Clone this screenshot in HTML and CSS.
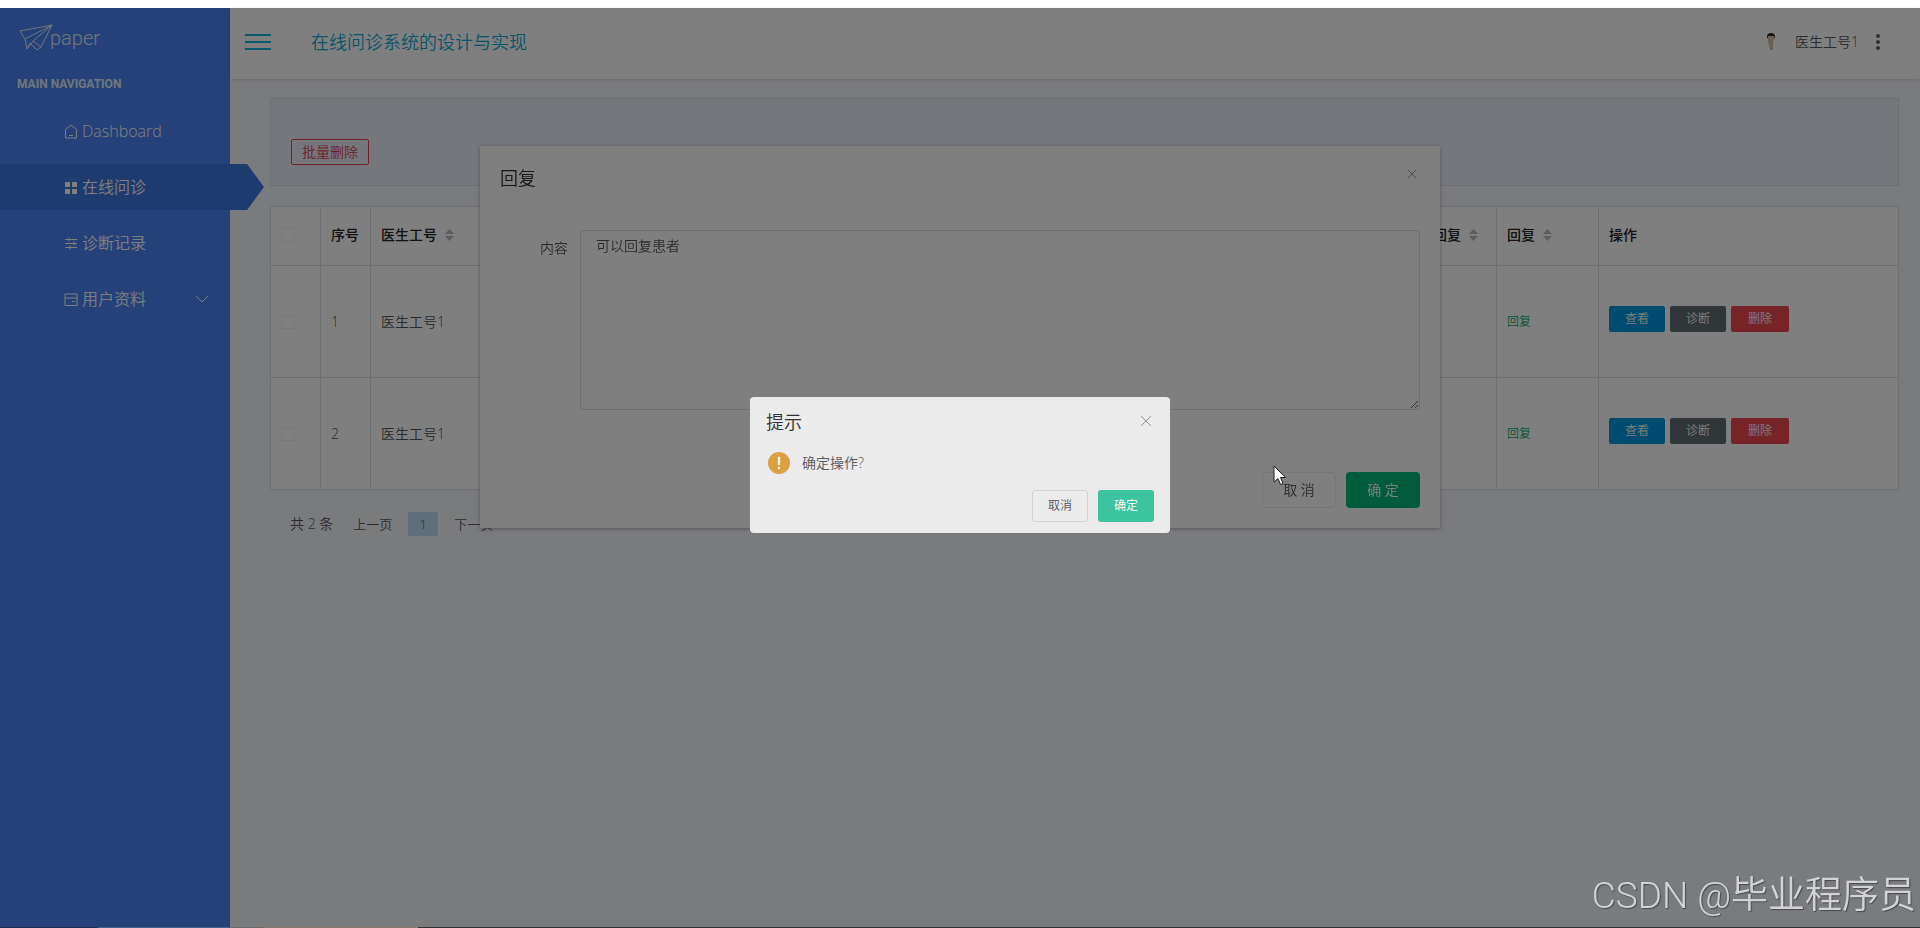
FILE: index.html
```
<!DOCTYPE html>
<html lang="zh">
  <head>
    <meta charset="UTF-8" />
    <meta name="viewport" content="width=device-width, initial-scale=1.0" />
    <title>在线问诊系统的设计与实现</title>
    <link rel="stylesheet" href="styles.css">
  </head>
  <body>
    <div class="wrapper">
      <!-- sidebar -->
      <nav class="sidebar">
        <a class="logo" href="#">
          <svg width="36" height="28" viewBox="0 0 36 28" fill="none" stroke="currentColor" stroke-width="1">
            <path d="M2 7 L34 1 L23 23 L15 17 L34 1 L7 15 Z M7 15 L9 25 L12 19 M9 25 L15 17 M12 19 L19 26 L23 23" />
          </svg><span>paper</span>
        </a>
        <h6 class="nav-title">MAIN NAVIGATION</h6>
        <ul class="menu">
          <li>
            <a href="#">
              <svg width="14" height="15" viewBox="0 0 14 15" fill="none" stroke="currentColor">
                <path d="M1.500 14 V5.500 L7 1 L12.500 5.500 V14 Z M5 11.500 H9" />
              </svg>Dashboard</a>
          </li>
          <li class="active">
            <a href="#">
              <svg width="14" height="15" viewBox="0 0 14 15" fill="currentColor">
                <path d="M1 2 H6 V7 H1 Z M8 2 H13 V7 H8 Z M1 9 H6 V14 H1 Z M8 9 H13 V14 H8 Z" />
              </svg>在线问诊</a>
          </li>
          <li>
            <a href="#">
              <svg width="14" height="15" viewBox="0 0 14 15" fill="none" stroke="currentColor">
                <path d="M1 3.500 H13 M1 7.500 H13 M1 11.500 H13 M5 1.500 V5.500 M10 5.500 V9.500 M6 9.500 V13.500" />
              </svg>诊断记录</a>
          </li>
          <li>
            <a href="#">
              <svg width="14" height="15" viewBox="0 0 14 15" fill="none" stroke="currentColor">
                <path d="M1 2 H13 V13.500 H1 Z M1 6 H13 M8 9.500 H11" />
              </svg>用户资料
              <svg class="arrow" width="14" height="8" viewBox="0 0 14 8" fill="none" stroke="currentColor">
                <path d="M1 1 L7 7 L13 1" />
              </svg>
            </a>
          </li>
        </ul>
      </nav>

      <!-- content -->
      <div class="content">
        <header class="top">
          <button class="burger" aria-label="menu"><i></i><i></i><i></i></button>
          <h1>在线问诊系统的设计与实现</h1>
          <div class="user">
            <svg width="12" height="20" viewBox="0 0 12 20">
              <path d="M2 5 Q2 1 6 1 Q10 1 10 5 L9 7 H3 Z" fill="#33251f" />
              <path d="M3 4 H9 V8 L8 10 V18 H5 L3 9 Z" fill="#d8bda3" />
            </svg>
            <span>医生工号1</span>
            <button class="dots" aria-label="more"><i></i><i></i><i></i></button>
          </div>
        </header>

        <main>
          <div class="tools">
            <button class="btn-batch">批量删除</button>
          </div>

          <table class="list">
            <colgroup>
              <col class="c-check" /><col class="c-index" /><col /><col class="c-replied" /><col class="c-reply" /><col class="c-action" />
            </colgroup>
            <thead>
              <tr>
                <th><input type="checkbox" aria-label="all" /></th>
                <th>序号</th>
                <th>医生工号<i class="sort"></i></th>
                <th>是否回复<i class="sort"></i></th>
                <th>回复<i class="sort"></i></th>
                <th>操作</th>
              </tr>
            </thead>
            <tbody>
              <tr>
                <td><input type="checkbox" aria-label="1" /></td>
                <td>1</td>
                <td>医生工号1</td>
                <td></td>
                <td><a class="reply" href="#">回复</a></td>
                <td>
                  <div class="actions">
                    <button class="blue">查看</button>
                    <button class="grey">诊断</button>
                    <button class="red">删除</button>
                  </div>
                </td>
              </tr>
              <tr>
                <td><input type="checkbox" aria-label="2" /></td>
                <td>2</td>
                <td>医生工号1</td>
                <td></td>
                <td><a class="reply" href="#">回复</a></td>
                <td>
                  <div class="actions">
                    <button class="blue">查看</button>
                    <button class="grey">诊断</button>
                    <button class="red">删除</button>
                  </div>
                </td>
              </tr>
            </tbody>
          </table>

          <div class="pager">
            <span>共 2 条</span>
            <button>上一页</button>
            <button class="current">1</button>
            <button>下一页</button>
          </div>
        </main>
      </div>
    </div>

    <!-- reply dialog -->
    <div class="dialog" role="dialog">
      <div class="dialog-head">
        <h2>回复</h2>
        <button class="close" aria-label="close">
          <svg width="10" height="10" viewBox="0 0 10 10" stroke="currentColor"><path d="M1 1 L9 9 M9 1 L1 9" /></svg>
        </button>
      </div>
      <div class="dialog-body">
        <label for="reply-text">内容</label>
        <textarea id="reply-text">可以回复患者</textarea>
      </div>
      <div class="dialog-foot">
        <button>取 消</button>
        <button class="primary">确 定</button>
      </div>
    </div>

    <!-- confirm box -->
    <div class="mask">
      <div class="confirm" role="alertdialog">
        <div class="confirm-head">
          <h3>提示</h3>
          <button class="close" aria-label="close">
            <svg width="12" height="12" viewBox="0 0 12 12" stroke="currentColor"><path d="M1 1 L11 11 M11 1 L1 11" /></svg>
          </button>
        </div>
        <p>
          <svg width="22" height="22" viewBox="0 0 22 22">
            <circle cx="11" cy="11" r="11" fill="#dd9f41" />
            <path d="M10 5 H12 L11.700 13 H10.300 Z" fill="#fff" stroke="#fff" stroke-width="0.500" />
            <circle cx="11" cy="16" r="1.200" fill="#fff" />
          </svg>
          确定操作?
        </p>
        <div class="confirm-foot">
          <button>取消</button>
          <button class="primary">确定</button>
        </div>
      </div>
    </div>

    <svg class="cursor" width="14" height="21" viewBox="0 0 14 21">
      <path d="M1 1 V17 L5 13.500 L7.500 19.500 L10 18.500 L7.500 12.500 H12.500 Z" fill="#fff" stroke="#222" />
    </svg>
    <div class="watermark">CSDN @毕业程序员</div>
    <div class="taskbar"></div>
  </body>
</html>
```
FILE: styles.css
```
* {
  box-sizing: border-box;
}

body {
  margin: 0;
  padding-top: 8px;
  background: #fff;
  color: #55575b;
  font-family: "Open Sans", "Noto Sans CJK SC", sans-serif;
  font-size: 14px;
  font-weight: 350;
  line-height: 20px;
  overflow: hidden;
}

button,
textarea {
  font: inherit;
  color: inherit;
}

button {
  padding: 0;
  border: 0;
  background: none;
}

a {
  color: inherit;
  text-decoration: none;
}

h1,
h2,
h3,
h6,
p,
ul {
  margin: 0;
  padding: 0;
}

.wrapper {
  display: flex;
  min-height: calc(100vh - 8px);
  background: #f5f6fa;
}

/* sidebar */
.sidebar {
  width: 230px;
  flex-shrink: 0;
  background: #4884f2;
  color: #fff;
}

.logo {
  display: flex;
  height: 60px;
  padding: 16px 0 0 18px;
  color: #e4ecf4;
  font: 300 20px/28px Roboto, sans-serif;
}

.logo span {
  margin-left: -4px;
}

.nav-title {
  padding-left: 17px;
  color: #e4ecf4;
  font: 700 12px/32px Roboto, sans-serif;
}

.menu {
  list-style: none;
  padding-top: 8px;
}

.menu li {
  height: 46px;
  margin-bottom: 10px;
}

.menu a {
  display: flex;
  align-items: center;
  gap: 4px;
  height: 46px;
  padding: 0 21px 0 64px;
  font-size: 16px;
}

.menu .active {
  position: relative;
  width: 264px;
  background: #3a76dc;
  clip-path: polygon(0 0, 247px 0, 100% 50%, 247px 100%, 0 100%);
}

.menu .arrow {
  margin-left: auto;
}

/* content */
.content {
  flex: 1;
  min-width: 0;
}

.top {
  display: flex;
  align-items: center;
  height: 71px;
  padding: 0 40px 3px 15px;
  background: #fff;
  box-shadow: 0 1px 4px rgba(0, 0, 0, 0.12);
}

.burger {
  display: flex;
  flex-direction: column;
  gap: 5px;
  width: 26px;
}

.burger i {
  height: 2px;
  background: #0fb5dc;
}

.top h1 {
  margin-left: 40px;
  color: #0fa9d0;
  font-size: 18px;
  font-weight: 350;
}

.user {
  display: flex;
  align-items: center;
  margin-left: auto;
}

.user span {
  margin: 0 17px 0 18px;
}

.dots {
  display: flex;
  flex-direction: column;
  gap: 2px;
}

.dots i {
  width: 4px;
  height: 4px;
  border-radius: 50%;
  background: #606266;
}

main {
  padding: 19px 21px 0 40px;
}

.tools {
  height: 88px;
  padding: 40px 20px 0;
  border: 1px solid #dcdfe8;
  background: #eaeefa;
}

.btn-batch {
  display: block;
  width: 78px;
  height: 26px;
  border: 1px solid #d9434f;
  border-radius: 2px;
  color: #d9434f;
}

.list {
  width: 100%;
  margin-top: 20px;
  border-collapse: collapse;
  table-layout: fixed;
  background: #fff;
  border: 1px solid #dcdfe6;
}

.list th,
.list td {
  padding: 0 10px;
  border: 1px solid #dcdfe6;
  text-align: left;
}

.list th {
  height: 59px;
  padding-bottom: 2px;
  color: #222;
  font-weight: 500;
}

.list td {
  height: 112px;
}

.c-check,
.c-index {
  width: 50px;
}

.c-replied,
.c-reply {
  width: 102px;
}

.c-action {
  width: 300px;
}

.list input {
  appearance: none;
  display: block;
  width: 14px;
  height: 14px;
  margin: 0;
  border: 1px solid #f2f3f6;
}

.sort {
  display: inline-block;
  width: 9px;
  height: 12px;
  margin-left: 8px;
  vertical-align: -1px;
  background: #b4b8c0;
  clip-path: polygon(50% 0, 100% 42%, 0 42%, 0 58%, 100% 58%, 50% 100%, 0 58%, 0 42%);
}

.reply {
  color: #00a86b;
  font-size: 12px;
}

.actions {
  display: flex;
  gap: 5px;
  padding-bottom: 5px;
}

.actions button {
  width: 56px;
  height: 26px;
  border-radius: 2px;
  color: #fff;
  font-size: 12px;
}

.actions .blue {
  background: #0099e0;
}

.actions .grey {
  background: #636c72;
}

.actions .red {
  width: 58px;
  background: #ed4653;
}

.pager {
  display: flex;
  align-items: center;
  height: 30px;
  margin-top: 19px;
  padding-left: 20px;
}

.pager span {
  margin-right: 20px;
}

.pager button {
  height: 24px;
  margin-right: 16px;
  font-size: 13px;
}

.pager .current {
  width: 30px;
  background: #c0dcf4;
}

/* dialog */
.dialog {
  position: fixed;
  top: 146px;
  left: 25%;
  width: 50%;
  padding: 20px;
  background: #fff;
  box-shadow: 0 1px 4px rgba(0, 0, 0, 0.3);
}

.dialog-head,
.confirm-head {
  display: flex;
  justify-content: space-between;
}

.dialog h2,
.confirm h3 {
  color: #303133;
  font-size: 18px;
  font-weight: 350;
  line-height: 24px;
}

.close {
  width: 16px;
  height: 16px;
  line-height: 0;
  color: #909399;
}

.confirm .close {
  margin-top: 3px;
}

.dialog-body {
  display: flex;
  margin-top: 40px;
}

.dialog-body label {
  width: 80px;
  padding: 8px 12px 0 0;
  text-align: right;
}

.dialog-body textarea {
  flex: 1;
  height: 180px;
  padding: 5px 15px;
  border: 1px solid #dcdfe6;
  border-radius: 4px;
  background: #fff;
}

.dialog-foot {
  display: flex;
  justify-content: flex-end;
  gap: 10px;
  margin-top: 62px;
}

.dialog-foot button {
  width: 74px;
  height: 36px;
  border: 1px solid #ebedf2;
  border-radius: 4px;
}

.dialog-foot .primary {
  border: 0;
  background: #00b87a;
  color: #fff;
}

/* confirm */
.mask {
  position: fixed;
  inset: 8px 0 0;
  display: flex;
  align-items: center;
  justify-content: center;
  padding-bottom: 6px;
  background: rgba(0, 0, 0, 0.5);
}

.confirm {
  width: 420px;
  padding: 13px 16px 11px;
  border-radius: 4px;
  background: #ebebeb;
}

.confirm p {
  display: flex;
  align-items: center;
  gap: 12px;
  height: 22px;
  margin: 18px 2px 16px;
}

.confirm-foot {
  display: flex;
  justify-content: flex-end;
  gap: 10px;
}

.confirm-foot button {
  width: 56px;
  height: 32px;
  border: 1px solid #d0d2d6;
  border-radius: 3px;
  font-size: 12px;
}

.confirm-foot .primary {
  border: 0;
  background: #3bc49e;
  color: #fff;
}

.cursor {
  position: fixed;
  top: 465px;
  left: 1273px;
}

.watermark {
  position: fixed;
  right: 4px;
  bottom: 8px;
  color: #d2d3d5;
  font: 350 37px/48px Roboto, "Noto Sans CJK SC", sans-serif;
  text-shadow: 1px 1px 1px rgba(0, 0, 0, 0.4);
}

.taskbar {
  position: fixed;
  inset: auto 0 0;
  height: 1px;
  background: linear-gradient(90deg, #1b3050 98px, #45608c 98px 230px, #6b6b6d 230px 264px, #8a7468 264px 418px, #333 418px);
}
```
